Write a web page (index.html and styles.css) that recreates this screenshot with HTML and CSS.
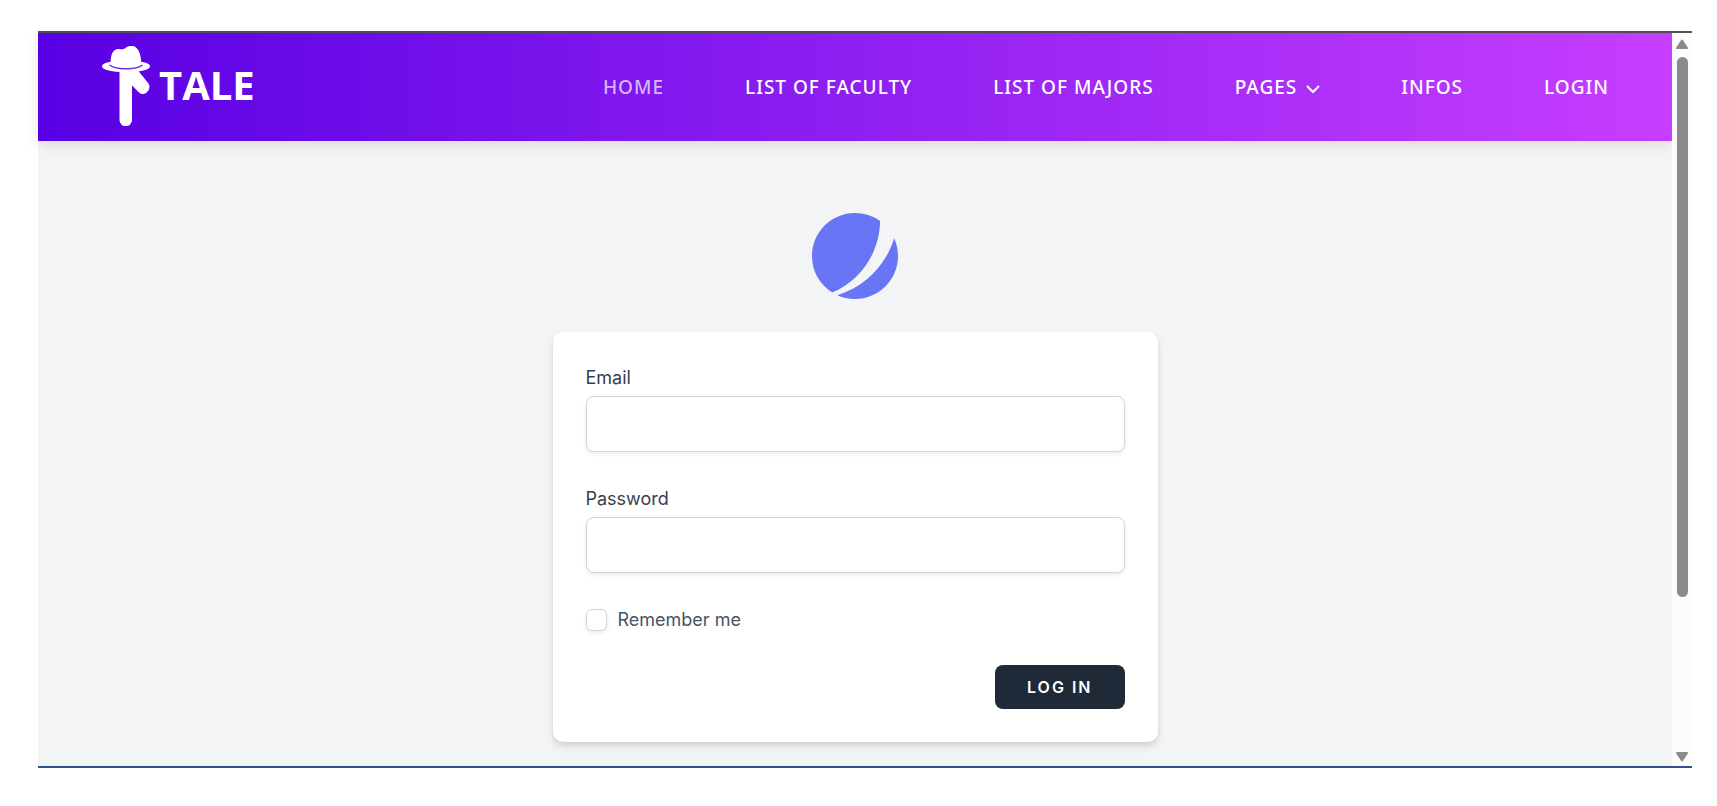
FILE: index.html
```html
<!DOCTYPE html>
<html lang="en">
  <head>
    <meta charset="UTF-8" />
    <meta name="viewport" content="width=device-width, initial-scale=1.0" />
    <title>Tale - Login</title>
    <link rel="stylesheet" href="styles.css">
  </head>

  <body>
    <div class="frame">
      <div class="page">
        <header class="header">
          <a class="logo" href="#">
            <svg class="logo-mark" viewBox="0 0 48 80" aria-hidden="true">
              <path d="M17.500 22H34L46.500 37.500C49.500 42 45 48.500 40 48C37 47.500 34 43 30 39.500V74A6.250 6.250 0 0 1 17.500 74Z" fill="#fff" />
              <path d="M0 20.500C0 18 4 16.500 8 16H40C44 16.500 48 18 48 20.500C48 24 38 26 24 26S0 24 0 20.500Z" fill="#fff" />
              <path d="M7.500 19C14 24 34 24 40.500 19" stroke="#6f27e8" stroke-width="1.500" fill="none" />
              <path d="M8.500 18.500C8.500 13 9 4 15.500 3C19 2.500 20 4 23 2.500C25 0 28 0 31 0C37 1.500 39 9 39.500 18.500C34 22.500 14 22.500 8.500 18.500Z" fill="#fff" />
            </svg>
            <span class="logo-text">TALE</span>
          </a>
          <nav class="nav">
            <a class="active" href="#">HOME</a>
            <a href="#">LIST OF FACULTY</a>
            <a href="#">LIST OF MAJORS</a>
            <a href="#">PAGES
              <svg class="chevron" viewBox="0 0 14 10" aria-hidden="true"><path d="M1 2L7 8L13 2" /></svg>
            </a>
            <a href="#">INFOS</a>
            <a href="#">LOGIN</a>
          </nav>
        </header>

        <main class="main">
          <svg class="emblem" viewBox="0 0 48 48" aria-hidden="true">
            <path d="M11.395 44.428C4.557 40.198 0 32.632 0 24 0 10.745 10.745 0 24 0a23.891 23.891 0 0113.997 4.502c-.2 17.907-11.097 33.245-26.602 39.926z" />
            <path d="M14.134 45.885A23.914 23.914 0 0024 48c13.255 0 24-10.745 24-24 0-3.516-.756-6.856-2.115-9.866-4.659 15.143-16.608 27.092-31.75 31.751z" />
          </svg>

          <form class="card">
            <label class="label" for="email">Email</label>
            <input class="field" id="email" type="email" />
            <label class="label" for="password">Password</label>
            <input class="field" id="password" type="password" />
            <div class="remember">
              <input class="check" id="remember" type="checkbox" />
              <label for="remember">Remember me</label>
            </div>
            <div class="actions">
              <button class="btn" type="submit">LOG IN</button>
            </div>
          </form>
        </main>
      </div>

      <div class="scrollbar" aria-hidden="true">
        <svg class="arrow" viewBox="0 0 12 10"><path d="M6 1.500L11 9H1Z" /></svg>
        <div class="track">
          <div class="thumb"></div>
        </div>
        <svg class="arrow" viewBox="0 0 12 10"><path d="M6 8.500L1 1H11Z" /></svg>
      </div>
    </div>
  </body>
</html>
```

FILE: styles.css
```css
* {
  box-sizing: border-box;
}

body {
  margin: 0;
  padding: 31px 25px 38px 38px;
  min-height: 100vh;
  display: flex;
  background: #fff;
  font-family: Inter, sans-serif;
}

.frame {
  flex: 1;
  display: flex;
  border-top: 2px solid #54505c;
  border-bottom: 2px solid #2f528f;
}

.page {
  flex: 1;
  display: flex;
  flex-direction: column;
  background: #f3f4f6;
}

.header {
  display: flex;
  align-items: center;
  justify-content: space-between;
  height: 108px;
  padding: 0 63px 0 64px;
  background: linear-gradient(to right, #5700e3, #c73eff);
  box-shadow: 0 4px 12px rgba(0, 0, 0, 0.1);
}

.logo {
  display: flex;
  align-items: center;
  gap: 9px;
  padding-bottom: 2px;
  color: #fff;
  text-decoration: none;
}

.logo-mark {
  width: 48px;
  height: 80px;
}

.logo-text {
  padding-bottom: 2px;
  font: bold 40px/54px "Open Sans", sans-serif;
}

.nav {
  display: flex;
  align-items: center;
  gap: 81px;
}

.nav a {
  color: #fff;
  font: 500 19px/26px "Noto Sans", sans-serif;
  letter-spacing: 1px;
  text-decoration: none;
  white-space: nowrap;
}

.nav a.active {
  color: rgba(255, 255, 255, 0.7);
}

.chevron {
  width: 14px;
  height: 10px;
  margin-left: 3px;
  fill: none;
  stroke: #fff;
  stroke-width: 2;
}

.main {
  flex: 1;
  display: flex;
  flex-direction: column;
  align-items: center;
  padding: 72px 24px 24px;
}

.emblem {
  width: 86px;
  height: 86px;
  fill: #6875f5;
}

.card {
  width: 100%;
  max-width: 605px;
  margin-top: 33px;
  padding: 33px;
  background: #fff;
  border-radius: 10px;
  box-shadow: 0 5px 8px rgba(0, 0, 0, 0.1), 0 2px 4px rgba(0, 0, 0, 0.06);
}

.label {
  display: block;
  color: #374151;
  font-size: 18px;
  line-height: 26px;
}

.field {
  display: block;
  width: 100%;
  height: 56px;
  margin: 5px 0 34px;
  padding: 8px 16px;
  border: 1px solid #d1d5db;
  border-radius: 8px;
  font: 18px/26px Inter, sans-serif;
  box-shadow: 0 2px 4px rgba(0, 0, 0, 0.08);
}

.remember {
  display: flex;
  align-items: center;
  gap: 11px;
  color: #4b5563;
  font-size: 18px;
  line-height: 26px;
}

.check {
  appearance: none;
  width: 21px;
  height: 22px;
  margin: 0;
  border: 1px solid #d1d5db;
  border-radius: 6px;
  background: #fff;
  box-shadow: 0 2px 4px rgba(0, 0, 0, 0.08);
}

.check:checked {
  background: #6875f5;
}

.actions {
  display: flex;
  justify-content: flex-end;
  margin-top: 32px;
}

.btn {
  height: 44px;
  padding: 0 32px;
  border: 0;
  border-radius: 8px;
  background: #1f2937;
  color: #fff;
  font: 600 16px/22px Inter, sans-serif;
  letter-spacing: 2px;
}

.scrollbar {
  width: 20px;
  display: flex;
  flex-direction: column;
  align-items: center;
  gap: 8px;
  padding: 6px 0 4px;
  background: #fcfcfc;
}

.arrow {
  width: 12px;
  height: 10px;
  fill: #8b8b8b;
  stroke: #8b8b8b;
  stroke-width: 2;
  stroke-linejoin: round;
}

.track {
  flex: 1;
}

.thumb {
  width: 11px;
  height: 540px;
  max-height: 100%;
  border-radius: 6px;
  background: #8b8b8b;
}
```
